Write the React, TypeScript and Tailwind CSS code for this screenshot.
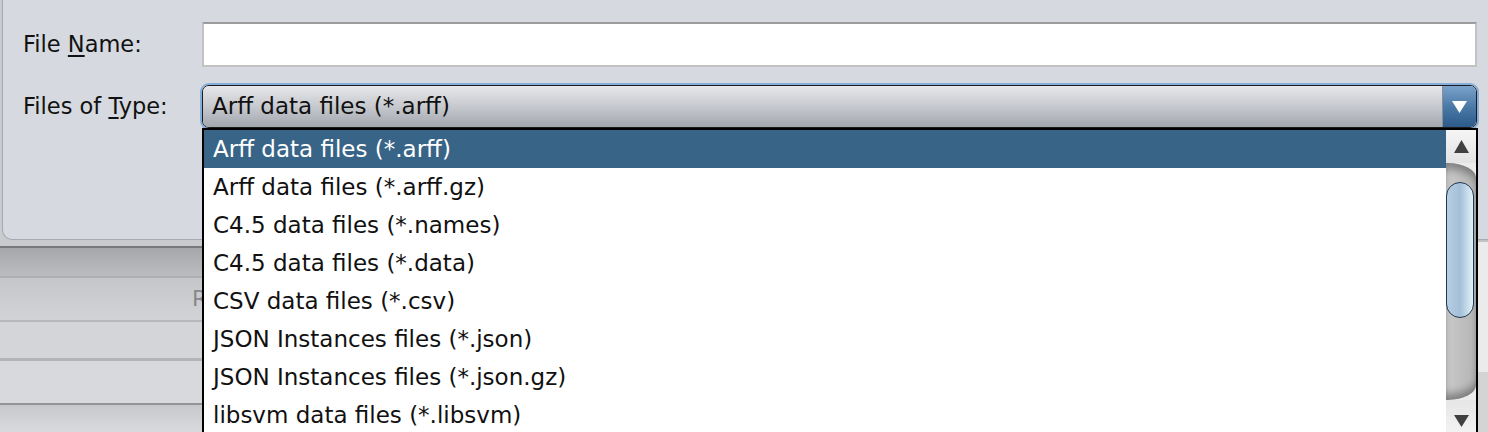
import React from 'react';

const fileTypes = [
  'Arff data files (*.arff)',
  'Arff data files (*.arff.gz)',
  'C4.5 data files (*.names)',
  'C4.5 data files (*.data)',
  'CSV data files (*.csv)',
  'JSON Instances files (*.json)',
  'JSON Instances files (*.json.gz)',
  'libsvm data files (*.libsvm)',
];

const UpArrow = () => (
  <svg width="15" height="13" viewBox="0 0 15 13">
    <polygon points="7.5,0 15,13 0,13" fill="#404040" />
  </svg>
);

const DownArrow = ({ color = '#404040' }: { color?: string }) => (
  <svg width="15" height="12" viewBox="0 0 15 12">
    <polygon points="0,0 15,0 7.5,12" fill={color} />
  </svg>
);

const App: React.FC = () => {
  return (
    <div className="relative h-[432px] w-[1488px] overflow-hidden bg-[#c9cbcf] font-['DejaVu_Sans',sans-serif] text-[#111]">
      <div className="flex h-full flex-col">
        {/* Dialog body */}
        <div className="ml-[2px] flex h-[240px] shrink-0 flex-col gap-[18px] rounded-bl-[10px] border-b border-l border-[#a6a9ae] bg-[#d6d9df] pt-[22px] pr-[11px] pl-[20px]">
          <div className="flex h-[45px] items-center">
            <span className="w-[179px] text-[22.5px] leading-none">
              File <span className="underline decoration-[1.5px] underline-offset-[3px]">N</span>ame:
            </span>
            <div className="h-full flex-1 border-2 border-[#c2c2c2] border-t-[#9c9c9c] bg-white" />
          </div>

          <div className="flex h-[43px] items-center">
            <span className="w-[179px] text-[22.5px] leading-none">
              Files of <span className="underline decoration-[1.5px] underline-offset-[3px]">T</span>ype:
            </span>
            <div className="flex h-full flex-1 overflow-hidden rounded-[7px] border-[1.5px] border-[#1c1c1c] shadow-[0_0_0_2px_#86aedb]">
              <div className="flex flex-1 items-center border-r border-[#8a8e96] bg-linear-to-b from-[#e6e7ea] via-[#c6c9ce] to-[#a3a7ae] pl-[9px] text-[23px] leading-none">
                Arff data files (*.arff)
              </div>
              <div className="flex w-[33px] items-center justify-center bg-linear-to-b from-[#7aa2cb] via-[#4c7aa7] to-[#2d5b89]">
                <DownArrow color="#ffffff" />
              </div>
            </div>
          </div>
        </div>

        {/* Window behind the dialog */}
        <div className="flex flex-1">
          <div className="flex flex-1 flex-col">
            <div className="h-[6px] bg-[#c8cacd]" />
            <div className="h-[2px] bg-[#76787c]" />
            <div className="h-[28px] bg-linear-to-b from-[#a5a7ab] to-[#babcc0]" />
            <div className="h-[2px] bg-[#adafb3]" />
            <div className="flex h-[42px] bg-linear-to-b from-[#c4c6ca] to-[#d1d3d6]">
              <div className="flex w-[202px] items-center overflow-hidden pl-[192px] text-[22px] leading-none text-[#86888c]">
                R
              </div>
            </div>
            <div className="h-[2px] bg-[#b6b8bb]" />
            <div className="h-[36px] bg-[#d3d5d8]" />
            <div className="h-[3px] bg-[#b2b4b7]" />
            <div className="h-[42px] bg-[#d7d9dc]" />
            <div className="h-[2px] bg-[#929498]" />
            <div className="flex-1 bg-linear-to-b from-[#c6c8cb] to-[#d8dadd]" />
          </div>
          <div className="flex w-[10px] flex-col">
            <div className="h-[2px] bg-[#c0c2c5]" />
            <div className="h-[130px] bg-[#ebebeb]" />
            <div className="flex-1 bg-[#d4d4d4]" />
          </div>
        </div>
      </div>

      {/* Popup list */}
      <div className="absolute top-[128px] left-[202px] flex w-[1276px] border-x-2 border-t-2 border-black bg-white">
        <div className="flex flex-1 flex-col">
          {fileTypes.map((t, i) => (
            <div
              key={t}
              className={`flex h-[38px] items-center pl-[9px] text-[23px] leading-none ${
                i === 0 ? 'bg-[#386487] text-white' : 'text-[#111]'
              }`}
            >
              {t}
            </div>
          ))}
        </div>

        {/* Scrollbar */}
        <div className="flex w-[30px] flex-col bg-[#ececec]">
          <div className="flex h-[33px] items-center justify-center bg-linear-to-b from-[#f5f5f5] to-[#e3e3e3]">
            <UpArrow />
          </div>
          <div className="h-[237px] rounded-r-[28px_15px] bg-linear-to-r from-[#cacaca] to-[#b4b4b4] pt-[19px] shadow-[inset_0_10px_8px_-4px_rgba(0,0,0,0.35),inset_0_-10px_8px_-4px_rgba(0,0,0,0.35)]">
            <div className="h-[136px] w-[28px] rounded-[14px] border-[1.5px] border-[#1d3752] bg-linear-to-r from-[#b8cee2] via-[#a3bfd8] to-[#e4f2fa]" />
          </div>
          <div className="flex h-[34px] justify-center bg-linear-to-b from-[#e6e6e6] to-[#f3f3f3] pt-[15px]">
            <DownArrow />
          </div>
        </div>
      </div>
    </div>
  );
};

export default App;
